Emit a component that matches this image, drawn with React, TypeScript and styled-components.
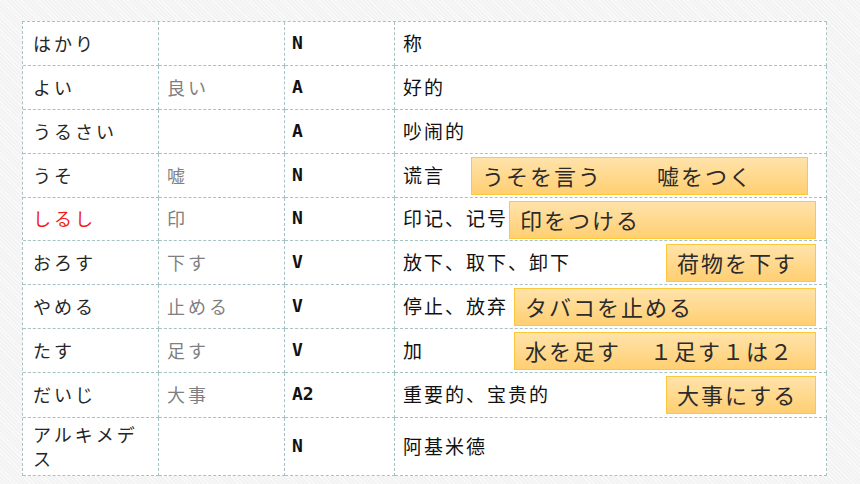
import styled, { createGlobalStyle } from 'styled-components';

const GlobalStyle = createGlobalStyle`
  html, body {
    margin: 0;
    padding: 0;
  }
  body {
    width: 860px;
    height: 484px;
    overflow: hidden;
    background-color: #f3f3f3;
    background-image: repeating-linear-gradient(
      45deg,
      rgba(255, 255, 255, 0.55) 0px,
      rgba(255, 255, 255, 0.55) 1px,
      transparent 1px,
      transparent 3px
    );
    font-family: 'Noto Sans CJK JP', 'Noto Sans', sans-serif;
  }
`;

const LINE = '1px dashed #a6c2c2';

// Word is one row of the vocabulary list.
type Word = {
  kana: string;
  kanji?: string;
  pos: string;
  meaning: string;
  height: number;
  red?: boolean;
  note?: Note;
};

// Note is the orange call-out laid over the meaning cell.
type Note = {
  left: number;
  width: number;
  parts: string[];
  gap?: number;
};

const words: Word[] = [
  { kana: 'はかり', pos: 'N', meaning: '称', height: 44 },
  { kana: 'よい', kanji: '良い', pos: 'A', meaning: '好的', height: 44 },
  { kana: 'うるさい', pos: 'A', meaning: '吵闹的', height: 44 },
  {
    kana: 'うそ',
    kanji: '嘘',
    pos: 'N',
    meaning: '谎言',
    height: 44,
    note: { left: 76, width: 337, parts: ['うそを言う', '嘘をつく'], gap: 55 },
  },
  {
    kana: 'しるし',
    kanji: '印',
    pos: 'N',
    meaning: '印记、记号',
    height: 43,
    red: true,
    note: { left: 114, width: 307, parts: ['印をつける'] },
  },
  {
    kana: 'おろす',
    kanji: '下す',
    pos: 'V',
    meaning: '放下、取下、卸下',
    height: 44,
    note: { left: 271, width: 150, parts: ['荷物を下す'] },
  },
  {
    kana: 'やめる',
    kanji: '止める',
    pos: 'V',
    meaning: '停止、放弃',
    height: 44,
    note: { left: 119, width: 302, parts: ['タバコを止める'] },
  },
  {
    kana: 'たす',
    kanji: '足す',
    pos: 'V',
    meaning: '加',
    height: 44,
    note: { left: 119, width: 302, parts: ['水を足す', '１足す１は２'], gap: 29 },
  },
  {
    kana: 'だいじ',
    kanji: '大事',
    pos: 'A2',
    meaning: '重要的、宝贵的',
    height: 45,
    note: { left: 271, width: 150, parts: ['大事にする'] },
  },
  { kana: 'アルキメデス', pos: 'N', meaning: '阿基米德', height: 58 },
];

const App = (): JSX.Element => (
  <>
    <GlobalStyle />
    <Page>
      <Table>
        {words.map((w) => (
          <Row key={w.kana} height={w.height}>
            <KanaCell red={w.red}>{w.kana}</KanaCell>
            <KanjiCell>{w.kanji}</KanjiCell>
            <PosCell>{w.pos}</PosCell>
            <MeaningCell>
              {w.meaning}
              {w.note && (
                <Callout left={w.note.left} width={w.note.width}>
                  {w.note.parts.map((p, i) => (
                    <CalloutPart key={p} gap={i > 0 ? w.note?.gap ?? 0 : 0}>
                      {p}
                    </CalloutPart>
                  ))}
                </Callout>
              )}
            </MeaningCell>
          </Row>
        ))}
      </Table>
    </Page>
  </>
);

export default App;

const Page = styled.div`
  padding: 21px 0 0 22px;
`;

const Table = styled.div`
  display: flex;
  flex-direction: column;
  width: 805px;
  background: #ffffff;
  border-top: ${LINE};
  border-left: ${LINE};
  box-sizing: border-box;
`;

interface RowProps {
  readonly height: number;
}
const Row = styled.div<RowProps>`
  display: grid;
  grid-template-columns: 136px 126px 110px 432px;
  height: ${(props): number => props.height}px;
`;

const Cell = styled.div`
  display: flex;
  align-items: center;
  box-sizing: border-box;
  border-right: ${LINE};
  border-bottom: ${LINE};
  padding: 0 8px 2px;
  font-size: 18px;
  line-height: 24px;
`;

interface KanaProps {
  readonly red?: boolean;
}
const KanaCell = styled(Cell)<KanaProps>`
  padding: 0 12px 2px 10px;
  letter-spacing: 3px;
  color: ${(props): string => (props.red ? '#f21c1c' : '#262626')};
`;

const KanjiCell = styled(Cell)`
  letter-spacing: 3px;
  color: #7f7f7f;
`;

const PosCell = styled(Cell)`
  padding-left: 7px;
  font-family: 'DejaVu Sans Mono', monospace;
  font-weight: 700;
  font-size: 18px;
  color: #111111;
`;

const MeaningCell = styled(Cell)`
  position: relative;
  font-family: 'Noto Sans CJK SC', 'Noto Sans', sans-serif;
  font-size: 19px;
  letter-spacing: 2px;
  color: #111111;
`;

interface CalloutProps {
  readonly left: number;
  readonly width: number;
}
const Callout = styled.div<CalloutProps>`
  position: absolute;
  top: 3px;
  left: ${(props): number => props.left}px;
  width: ${(props): number => props.width}px;
  height: 38px;
  box-sizing: border-box;
  display: flex;
  align-items: center;
  padding: 0 10px 2px;
  background: linear-gradient(180deg, #ffe3ab 0%, #ffd98e 50%, #ffcf72 100%);
  border: 1.5px solid #ffc83a;
  font-family: 'Noto Sans CJK JP', 'Noto Sans', sans-serif;
  font-size: 22px;
  letter-spacing: 2px;
  color: #2b2b2b;
  white-space: nowrap;
`;

interface PartProps {
  readonly gap: number;
}
const CalloutPart = styled.span<PartProps>`
  margin-left: ${(props): number => props.gap}px;
`;
